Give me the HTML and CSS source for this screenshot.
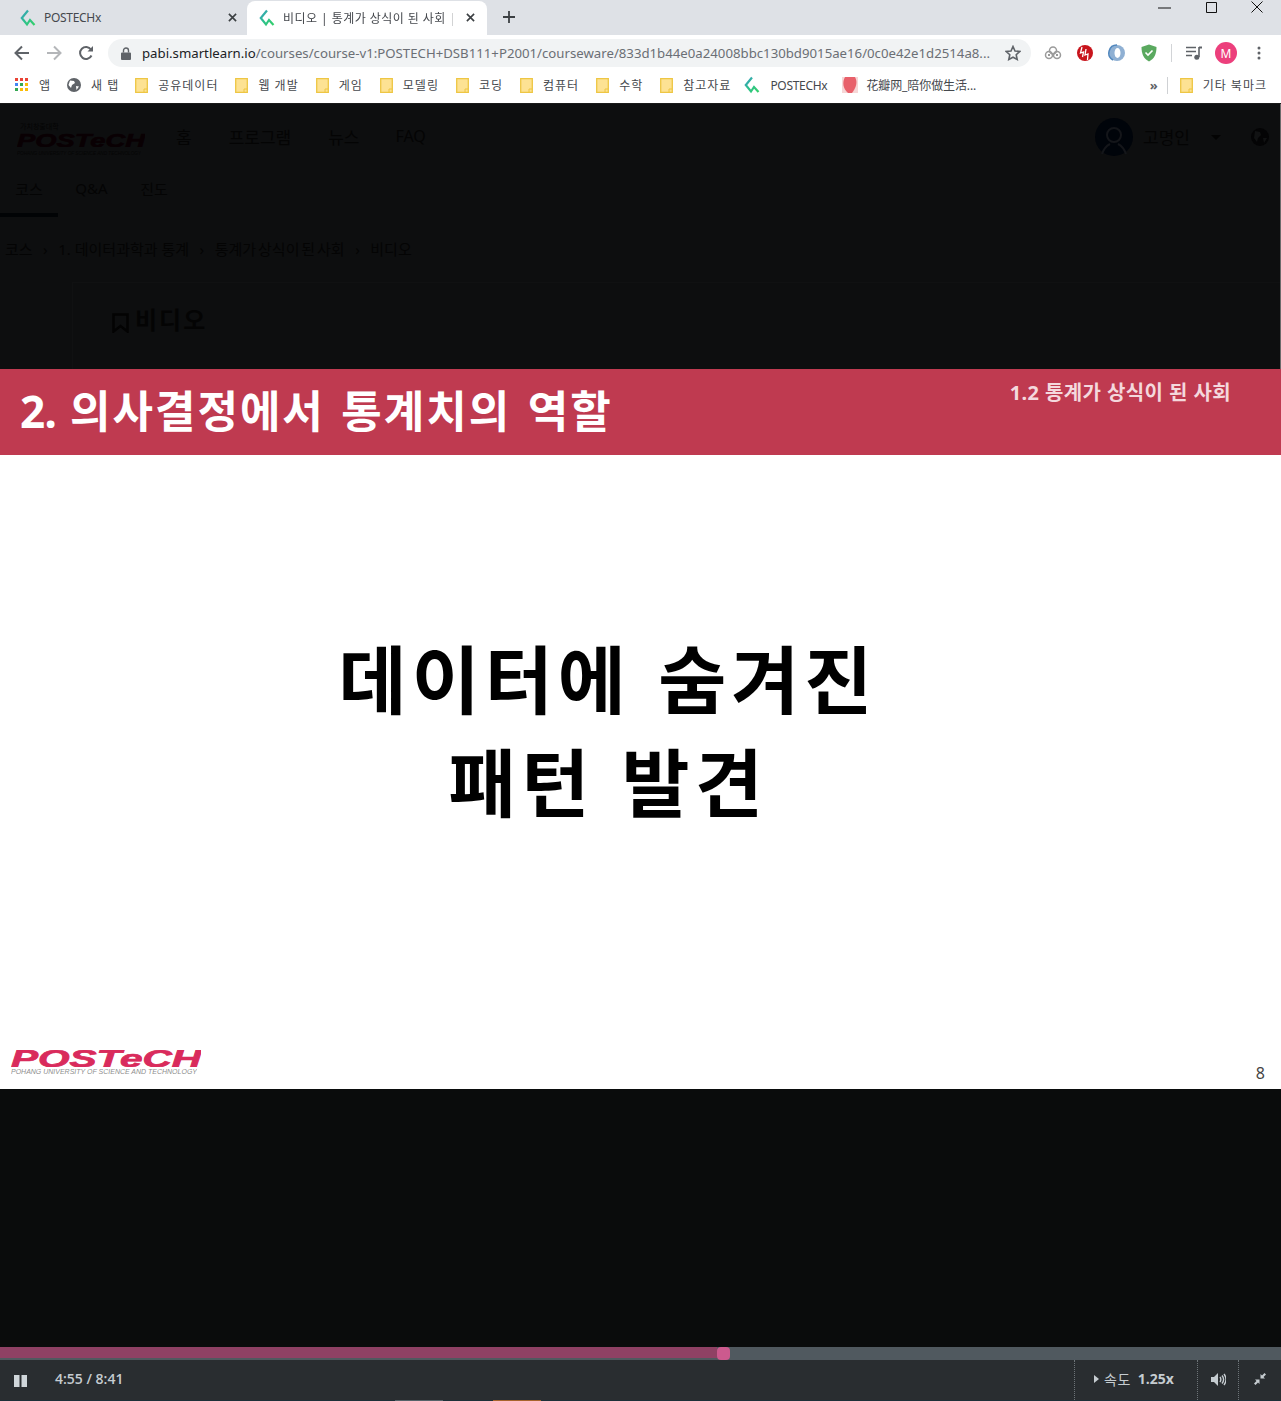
FILE: index.html
```html
<!DOCTYPE html>
<html lang="ko">
<head>
<meta charset="utf-8">
<title>비디오 | 통계가 상식이 된 사회</title>
<link rel="stylesheet" href="styles.css">
</head>
<body>
<svg class="defs" width="0" height="0" aria-hidden="true">
  <defs>
    <linearGradient id="lg" x1="0" y1="0" x2="1" y2="1">
      <stop offset="0" stop-color="#3a9bc4"/><stop offset=".45" stop-color="#2dbf8f"/><stop offset="1" stop-color="#35d06a"/>
    </linearGradient>
    <symbol id="px" viewBox="0 0 18 18">
      <path d="M9 1.5 2.8 9 8 15.500 11 11 15.500 16" fill="none" stroke="url(#lg)" stroke-width="2.200"/>
    </symbol>
    <symbol id="folder" viewBox="0 0 13 15">
      <path d="M.7.700h11.600v13.600H.7z" fill="#fde293" stroke="#eec643" stroke-width="1.300"/>
      <path d="M9 14v-3h3" fill="none" stroke="#eec643"/>
    </symbol>
  </defs>
</svg>

<header class="tabstrip">
  <div class="tab">
    <svg class="tab-ico"><use href="#px"/></svg>
    <span class="tab-title">POSTECHx</span>
    <svg class="tab-x" viewBox="0 0 10 10"><path d="M1 1l8 8M9 1l-8 8"/></svg>
  </div>
  <div class="tab tab-active">
    <svg class="tab-ico"><use href="#px"/></svg>
    <span class="tab-title tab-fade">비디오 | 통계가 상식이 된 사회 | POSTECHx</span>
    <svg class="tab-x" viewBox="0 0 10 10"><path d="M1 1l8 8M9 1l-8 8"/></svg>
  </div>
  <svg class="tab-plus" viewBox="0 0 12 12"><path d="M6 0v12M0 6h12"/></svg>
  <div class="winctl">
    <svg class="win-min" viewBox="0 0 13 3"><path d="M0 1h13"/></svg>
    <svg class="win-max" viewBox="0 0 11 11"><path d="M.5.500h10v10H.5z"/></svg>
    <svg class="win-close" viewBox="0 0 12 12"><path d="M.5.500l11 11M11.500.500l-11 11"/></svg>
  </div>
</header>

<div class="toolbar">
  <svg class="nav nav-back" viewBox="0 0 16 16"><path d="M15 8H2M8 1.500 1.500 8 8 14.500"/></svg>
  <svg class="nav nav-fwd" viewBox="0 0 16 16"><path d="M1 8h13M8 1.500 14.500 8 8 14.500"/></svg>
  <svg class="nav nav-reload" viewBox="0 0 16 16"><path d="M13.500 10.500A6 6 0 1 1 13 4.500"/><path class="fill" d="M15 1v5.500H9.500z"/></svg>
  <div class="omnibox">
    <svg class="lock" viewBox="0 0 10 13"><path d="M1 5.500h8a1 1 0 0 1 1 1V12a1 1 0 0 1-1 1H1a1 1 0 0 1-1-1V6.500a1 1 0 0 1 1-1z"/><path class="lock-arc" d="M2.500 5.500V3.500a2.500 2.500 0 0 1 5 0v2"/></svg>
    <span class="url"><span class="url-host">pabi.smartlearn.io</span>/courses/course-v1:POSTECH+DSB111+P2001/courseware/833d1b44e0a24008bbc130bd9015ae16/0c0e42e1d2514a8...</span>
    <svg class="star" viewBox="0 0 16 16"><path d="M8 1.500l2 4.500 4.800.500-3.600 3.200 1 4.800L8 12.200l-4.200 2.300 1-4.800L1.200 6.500 6 6z"/></svg>
  </div>
  <div class="exts">
    <svg class="ext" viewBox="0 0 18 18"><g fill="none" stroke="#9a9a9a" stroke-width="1.500"><circle cx="9" cy="6.500" r="3.500"/><circle cx="5" cy="11" r="3.500"/><circle cx="13" cy="11" r="3.500"/></g><circle cx="5" cy="11" r="1" fill="#777"/><circle cx="13" cy="11" r="1" fill="#777"/></svg>
    <svg class="ext" viewBox="0 0 18 18"><circle cx="9" cy="9" r="8" fill="#c8141c"/><path d="M6 3 4.500 9l3-1-1 5M10 5l-1 6 3-1-.500 6" fill="none" stroke="#fff" stroke-width="1.300"/></svg>
    <svg class="ext" viewBox="0 0 18 18"><circle cx="9" cy="9" r="8" fill="#8fb0d3"/><ellipse cx="9.500" cy="9" rx="3" ry="5" fill="#fff"/><path d="M9 1a8 8 0 0 0-4 15" fill="none" stroke="#4f86bd" stroke-width="1.500"/></svg>
    <svg class="ext" viewBox="0 0 18 18"><path d="M9 .5 16.500 3c0 7-2 11.500-7.500 14.500C3.500 14.500 1.500 10 1.500 3z" fill="#5aa95f"/><path d="M5.500 8.500 8 11l4.500-4.500" fill="none" stroke="#fff" stroke-width="1.600"/></svg>
    <span class="tool-sep"></span>
    <svg class="ext ext-music" viewBox="0 0 16 14"><path d="M0 1.500h10M0 5.500h10M0 9.500h6" stroke="#5f6368" stroke-width="1.600" fill="none"/><path d="M13 1v10" stroke="#5f6368" stroke-width="1.600"/><path d="M13 .5h3v2h-3z" fill="#5f6368"/><circle cx="10.800" cy="11.200" r="2.500" fill="#5f6368"/></svg>
    <span class="avatar">M</span>
    <svg class="kebab" viewBox="0 0 4 14"><circle cx="2" cy="2" r="1.500"/><circle cx="2" cy="7" r="1.500"/><circle cx="2" cy="12" r="1.500"/></svg>
  </div>
</div>

<nav class="bookmarks">
  <div class="bm bm-apps">
    <svg class="apps" viewBox="0 0 14 14">
      <rect width="3" height="3" fill="#ea4335"/><rect x="5" width="3" height="3" fill="#ea4335"/><rect x="10" width="3" height="3" fill="#ea4335"/>
      <rect y="5" width="3" height="3" fill="#4285f4"/><rect x="5" y="5" width="3" height="3" fill="#34a853"/><rect x="10" y="5" width="3" height="3" fill="#fbbc05"/>
      <rect y="10" width="3" height="3" fill="#34a853"/><rect x="5" y="10" width="3" height="3" fill="#fbbc05"/><rect x="10" y="10" width="3" height="3" fill="#fbbc05"/>
    </svg>앱
  </div>
  <div class="bm bm-newtab">
    <svg class="globe" viewBox="0 0 14 14"><circle cx="7" cy="7" r="7" fill="#5f6368"/><path d="M3 2.500 7 3l1 2-3 2-1 3L1.500 7zM9 8l3 .5-2.500 3.500z" fill="#fff"/></svg>새 탭
  </div>
  <div class="bm"><svg class="fold"><use href="#folder"/></svg>공유데이터</div>
  <div class="bm"><svg class="fold"><use href="#folder"/></svg>웹 개발</div>
  <div class="bm"><svg class="fold"><use href="#folder"/></svg>게임</div>
  <div class="bm"><svg class="fold"><use href="#folder"/></svg>모델링</div>
  <div class="bm"><svg class="fold"><use href="#folder"/></svg>코딩</div>
  <div class="bm"><svg class="fold"><use href="#folder"/></svg>컴퓨터</div>
  <div class="bm"><svg class="fold"><use href="#folder"/></svg>수학</div>
  <div class="bm"><svg class="fold"><use href="#folder"/></svg>참고자료</div>
  <div class="bm bm-px"><svg class="bm-pxico"><use href="#px"/></svg>POSTECHx</div>
  <div class="bm bm-flower">
    <svg class="flower" viewBox="0 0 16 16"><rect width="16" height="16" fill="#f6d6d6"/><path d="M3 0h10c3 5 1 11-3 16H6C1 12 0 5 3 0z" fill="#e8606a"/></svg>花瓣网_陪你做生活...
  </div>
  <div class="bm-right">
    <span class="more">»</span>
    <span class="bm-sep"></span>
    <div class="bm bm-last"><svg class="fold"><use href="#folder"/></svg>기타 북마크</div>
  </div>
</nav>

<main class="page">
  <section class="dim">
    <div class="dim-head">
      <div class="dim-logo">
        <span class="dim-logo-top">가치창출대학</span>
        <svg class="dim-logo-word" viewBox="0 0 128 15"><text x="0" y="14.500" textLength="128" lengthAdjust="spacingAndGlyphs">POSTeCH</text></svg>
        <svg class="dim-logo-sub" viewBox="0 0 124 8"><text x="0" y="6" textLength="124" lengthAdjust="spacingAndGlyphs">POHANG UNIVERSITY OF SCIENCE AND TECHNOLOGY</text></svg>
      </div>
      <span class="dim-nav dim-n1">홈</span>
      <span class="dim-nav dim-n2">프로그램</span>
      <span class="dim-nav dim-n3">뉴스</span>
      <span class="dim-nav dim-n4">FAQ</span>
      <div class="dim-user">
        <svg class="dim-avatar" viewBox="0 0 38 38"><circle cx="19" cy="19" r="19" fill="#00040a"/><circle cx="19" cy="17" r="7" fill="none" stroke="#14161a" stroke-width="2"/><path d="M7 36c2-6 6-9 8-10M31 36c-2-6-6-9-8-10" fill="none" stroke="#14161a" stroke-width="2"/></svg>
        <span class="dim-nav dim-name">고명인</span>
        <span class="dim-caret"></span>
        <svg class="dim-globe" viewBox="0 0 18 18"><circle cx="9" cy="9" r="9" fill="#040405"/><path d="M4 3l5 1 1 3-3 3-1 4-3-4zM12 10l4 0-3 5z" fill="#111213"/></svg>
      </div>
    </div>
    <div class="dim-tabs">
      <span class="dim-tab dim-tab-on">코스</span>
      <span class="dim-tab">Q&amp;A</span>
      <span class="dim-tab">진도</span>
    </div>
    <div class="crumbs">
      <span>코스</span><i>›</i><span>1. 데이터과학과 통계</span><i>›</i><span class="crumb-tight">통계가 상식이 된 사회</span><i>›</i><span>비디오</span>
    </div>
    <div class="dim-panel">
      <svg class="dim-mark" viewBox="0 0 17 20"><path d="M1.500 1.500h14v17L8.500 13l-7 5.500z" fill="none" stroke="#030303" stroke-width="2.500"/></svg>
      <h1 class="dim-title">비디오</h1>
    </div>
  </section>

  <section class="slide">
    <div class="slide-banner">
      <h2 class="slide-title"><span class="slide-no">2. </span>의사결정에서 통계치의 역할</h2>
      <span class="slide-sub">1.2 통계가 상식이 된 사회</span>
    </div>
    <div class="slide-body">
      <p class="slide-big">데이터에 숨겨진<br>패턴 발견</p>
    </div>
    <div class="slide-foot">
      <div class="slide-logo">
        <svg class="slide-word" viewBox="0 0 190 17"><text x="0" y="16.500" textLength="190" lengthAdjust="spacingAndGlyphs">POSTeCH</text></svg>
        <svg class="slide-logo-sub" viewBox="0 0 186 8"><text x="0" y="6.500" textLength="186" lengthAdjust="spacingAndGlyphs">POHANG UNIVERSITY OF SCIENCE AND TECHNOLOGY</text></svg>
      </div>
      <span class="slide-num">8</span>
    </div>
  </section>

  <div class="letterbox"></div>

  <div class="progress">
    <div class="progress-done"></div>
    <span class="progress-knob"></span>
  </div>

  <div class="controls">
    <svg class="pause" viewBox="0 0 13 12"><path d="M0 0h5.500v12H0zM7.500 0H13v12H7.500z"/></svg>
    <span class="time">4:55 / 8:41</span>
    <div class="ctl-right">
      <div class="ctl-speed">
        <span class="ctl-tri"></span>
        <span class="ctl-label">속도</span>
        <span class="ctl-value">1.25x</span>
      </div>
      <div class="ctl-vol">
        <svg viewBox="0 0 15 13"><path class="solid" d="M0 4h3l4-4v13L3 9H0z"/><path d="M9 4c1 1.500 1 3.500 0 5M11 2.500c2 2.500 2 5.500 0 8M13 1c2.600 3.500 2.600 7.500 0 11"/></svg>
      </div>
      <div class="ctl-full">
        <svg viewBox="0 0 12 12"><path d="M12 1.500 10.500 0 8 2.500 6.500 1v4.500H11L9.500 4zM0 10.500 1.500 12 4 9.500 5.500 11V6.500H1L2.500 8z"/></svg>
      </div>
    </div>
  </div>
  <div class="underbar"><span class="ub ub-grey"></span><span class="ub ub-orange"></span></div>
</main>
</body>
</html>
```
FILE: styles.css
```css
* { box-sizing: border-box; }
html, body { margin: 0; padding: 0; }
body {
  width: 1281px;
  height: 1401px;
  overflow: hidden;
  background: #0c0d0e;
  font-family: "Noto Sans", "Noto Sans CJK KR", sans-serif;
  color: #3c4043;
}
.defs { position: absolute; }

/* tab strip */
.tabstrip {
  height: 35px;
  background: #dee1e6;
  display: flex;
  align-items: flex-end;
  padding-left: 8px;
}
.tab {
  width: 239px;
  height: 34px;
  display: flex;
  align-items: center;
  padding: 0 10px 1px 11px;
  font-size: 12px;
  color: #45484d;
}
.tab-active {
  width: 240px;
  padding-right: 12px;
  background: #fff;
  border-radius: 8px 8px 0 0;
}
.tab-ico { width: 18px; height: 18px; flex: none; }
.tab-title {
  flex: 1;
  margin-left: 7px;
  white-space: nowrap;
  overflow: hidden;
  font-family: "Noto Sans", "Noto Sans CJK KR", sans-serif;
  letter-spacing: -.3px;
}
.tab-active .tab-title { letter-spacing: .45px; }
.tab-fade { -webkit-mask-image: linear-gradient(90deg, #000 90%, transparent 98%); mask-image: linear-gradient(90deg, #000 90%, transparent 98%); }
.tab-x { width: 9px; height: 9px; flex: none; margin-left: 6px; stroke: #3c4043; stroke-width: 1.800; fill: none; }
.tab-plus { width: 12px; height: 12px; margin: 0 0 12px 16px; stroke: #3c4043; stroke-width: 1.800; fill: none; }
.winctl {
  margin-left: auto;
  align-self: flex-start;
  display: flex;
  align-items: flex-start;
  padding: 1px 18px 0 0;
  stroke: #111;
  fill: none;
}
.win-min { width: 13px; height: 3px; margin-top: 6px; }
.win-max { width: 11px; height: 11px; margin: 1px 0 0 35px; }
.win-close { width: 12px; height: 12px; margin-left: 34px; }

/* toolbar */
.toolbar {
  height: 35px;
  background: #fff;
  display: flex;
  align-items: center;
  padding: 3px 0 2px 14px;
}
.nav { width: 16px; height: 16px; fill: none; stroke: #5f6368; stroke-width: 2; flex: none; }
.nav-fwd { margin-left: 16px; stroke: #b4b6b9; }
.nav-reload { margin-left: 16px; }
.nav .fill { fill: #5f6368; stroke: none; }
.omnibox {
  width: 923px;
  height: 28px;
  margin-left: 14px;
  border-radius: 14px;
  background: #f1f3f4;
  display: flex;
  align-items: center;
  padding: 0 10px 0 13px;
}
.lock { width: 10px; height: 13px; fill: #5f6368; flex: none; }
.lock .lock-arc { fill: none; stroke: #5f6368; stroke-width: 1.400; }
.url {
  flex: 1;
  margin-left: 11px;
  font-size: 13.210px;
  color: #6b6f75;
  white-space: nowrap;
  overflow: hidden;
}
.url-host { color: #202124; }
.star { width: 16px; height: 16px; fill: none; stroke: #5f6368; stroke-width: 1.600; flex: none; }
.exts { display: flex; align-items: center; padding-left: 13px; }
.ext { width: 18px; height: 18px; flex: none; margin-right: 14px; }
.tool-sep { width: 1px; height: 18px; background: #d2d4d7; margin: 0 14px 0 -1px; }
.ext-music { width: 16px; height: 14px; margin-right: 14px; }
.avatar {
  width: 22px;
  height: 22px;
  border-radius: 50%;
  background: #ec3f7c;
  color: #fff;
  font-size: 12px;
  display: flex;
  align-items: center;
  justify-content: center;
  margin-left: -1px;
}
.kebab { width: 4px; height: 14px; fill: #5f6368; margin-left: 20px; }

/* bookmarks */
.bookmarks {
  height: 34px;
  background: #fff;
  border-bottom: 1px solid #1a1a1a;
  display: flex;
  align-items: center;
  padding: 0 14px 3px 15px;
  font-size: 12px;
  color: #45484d;
  letter-spacing: 1px;
  white-space: nowrap;
}
.bm { display: flex; align-items: center; margin-right: 17px; }
.apps { width: 14px; height: 14px; margin-right: 10px; }
.bm-apps { margin-right: 16px; }
.globe { width: 14px; height: 14px; margin-right: 10px; }
.bm-newtab { margin-right: 16px; }
.fold { width: 13px; height: 15px; margin-right: 10px; }
.bm-px { letter-spacing: -.3px; margin-left: -5px; margin-right: 15px; }
.bm-pxico { width: 18px; height: 18px; margin-right: 9px; }
.bm-flower { font-family: "Noto Sans", "Noto Sans CJK SC", sans-serif; letter-spacing: -.1px; margin-right: 0; }
.flower { width: 16px; height: 16px; margin-right: 8px; }
.bm-right { margin-left: auto; display: flex; align-items: center; }
.more { font-size: 13px; font-weight: 700; color: #5f6368; letter-spacing: 0; margin-right: 9px; }
.bm-sep { width: 1px; height: 17px; background: #cfd1d4; margin-right: 12px; }
.bm-last { margin-right: 0; }

/* dimmed page behind the video */
.page { height: 1297px; display: flex; flex-direction: column; }
.dim {
  height: 265px;
  flex: none;
  background: #0d0e0f;
  color: #040404;
  border-right: 1px solid #6c6c6c;
  overflow: hidden;
}
.dim-head { height: 66px; display: flex; align-items: center; padding-left: 17px; }
.dim-logo { width: 128px; display: flex; flex-direction: column; margin-top: 4px; }
.dim-logo-top { font-size: 7px; line-height: 9px; margin-bottom: 1px; padding-left: 3px; white-space: nowrap; }
.dim-logo-word { width: 128px; height: 15px; display: block; }
.dim-logo-word text { font: italic 700 18.500px "Liberation Sans", sans-serif; fill: #090003; stroke: #090003; stroke-width: .6px; }
.dim-logo-sub { width: 124px; height: 8px; margin-top: 2px; display: block; }
.dim-logo-sub text { font: italic 400 6px "Liberation Sans", sans-serif; fill: #050505; }
.dim-nav { font-size: 17px; margin-bottom: 2px; }
.dim-n1 { margin-left: 31px; }
.dim-n2 { margin-left: 37px; }
.dim-n3 { margin-left: 37px; }
.dim-n4 { margin-left: 36px; font-size: 16px; }
.dim-user { margin-left: auto; display: flex; align-items: center; padding-right: 11px; }
.dim-avatar { width: 38px; height: 38px; }
.dim-name { margin-left: 10px; }
.dim-caret { width: 0; height: 0; border: 5px solid transparent; border-top: 5px solid #030303; border-bottom: 0; margin-left: 21px; }
.dim-globe { width: 18px; height: 18px; margin-left: 30px; }
.dim-tabs { height: 47px; display: flex; }
.dim-tab { width: 58px; padding: 8px 0 0; text-align: center; font-size: 15px; }
.dim-tab + .dim-tab { margin-left: 4.500px; }
.dim-tab-on { border-bottom: 4px solid #010305; }
.crumbs { height: 65px; display: flex; align-items: flex-start; padding: 22px 0 0 5px; font-size: 15px; line-height: 20px; }
.crumbs i { font-style: normal; margin: 0 10.500px; }
.crumb-tight { word-spacing: -2px; }
.dim-panel {
  height: 87px;
  margin-left: 72px;
  border-top: 1px solid #101112;
  border-left: 1px solid #101112;
  display: flex;
  align-items: flex-start;
  padding: 22px 0 0 39px;
}
.dim-mark { width: 17px; height: 20px; margin-top: 8px; }
.dim-title { margin: 0 0 0 6px; font-size: 24px; font-weight: 700; line-height: 30px; letter-spacing: 2px; }

/* slide */
.slide { height: 720px; flex: none; background: #fff; display: flex; flex-direction: column; }
.slide-banner {
  height: 86px;
  flex: none;
  background: #bf3a50;
  color: #fff;
  display: flex;
  justify-content: space-between;
  align-items: flex-start;
  padding: 0 50px 0 20px;
}
.slide-title { margin: 12px 0 0; font-size: 44px; line-height: 60px; font-weight: 700; letter-spacing: 2px; word-spacing: 3px; white-space: nowrap; }
.slide-no { letter-spacing: -.67px; }
.slide-sub { margin-top: 10px; font-size: 20px; line-height: 28px; font-weight: 700; color: #f4d8dd; letter-spacing: .4px; }
.slide-body { flex: 1; display: flex; align-items: center; justify-content: center; padding: 0 65px 34px 0; }
.slide-big { margin: 0; text-align: center; color: #000; font-size: 74px; line-height: 103px; font-weight: 700; letter-spacing: 5px; word-spacing: 3px; }
.slide-foot { height: 49px; flex: none; display: flex; justify-content: space-between; align-items: flex-end; padding: 0 16px 5px 11px; }
.slide-logo { width: 190px; display: flex; flex-direction: column; align-self: flex-start; padding-top: 10px; }
.slide-word { width: 190px; height: 17px; display: block; }
.slide-word text { font: italic 700 23px "Liberation Sans", sans-serif; fill: #d92b5c; stroke: #d92b5c; stroke-width: .7px; }
.slide-logo-sub { width: 186px; height: 8px; display: block; }
.slide-logo-sub text { font: italic 400 6.500px "Liberation Sans", sans-serif; fill: #8e8e8e; }
.slide-num { font-size: 16px; line-height: 22px; color: #444; }

/* player */
.letterbox { height: 258px; flex: none; background: #0a0c0c; }
.progress { height: 13px; flex: none; background: #50595f; display: flex; }
.progress-done { width: 717px; height: 11px; background: #8f4164; }
.progress-knob { width: 13px; height: 13px; border-radius: 4px; background: #cc5a8e; }
.controls {
  height: 40px;
  flex: none;
  background: #292d30;
  display: flex;
  align-items: center;
  padding-left: 14px;
  color: #c5ccd0;
}
.pause { width: 13px; height: 12px; fill: #cfd6da; margin-top: 1px; }
.time { margin-left: 28px; font: 600 14px/20px "Open Sans", sans-serif; margin-bottom: 2px; }
.ctl-right { margin-left: auto; height: 100%; display: flex; align-items: stretch; }
.ctl-speed, .ctl-vol, .ctl-full { display: flex; align-items: center; border-left: 1px dotted #6d7478; padding-bottom: 2px; }
.ctl-speed { width: 123px; padding-left: 19px; }
.ctl-tri { width: 0; height: 0; border: 4px solid transparent; border-left: 5px solid #c5ccd0; border-right: 0; }
.ctl-label { margin-left: 5px; font-size: 14px; letter-spacing: .5px; }
.ctl-value { margin-left: 7px; font: 700 14px/20px "Open Sans", sans-serif; }
.ctl-vol { width: 41px; justify-content: center; }
.ctl-vol svg { width: 15px; height: 13px; fill: none; stroke: #c5ccd0; stroke-width: 1.400; }
.ctl-vol .solid { fill: #c5ccd0; stroke: none; }
.ctl-full { width: 43px; padding-left: 15px; }
.ctl-full svg { width: 12px; height: 12px; fill: #c5ccd0; }
.underbar { height: 1px; flex: none; background: #1d3038; display: flex; padding-left: 395px; }
.ub { width: 48px; height: 1px; }
.ub-grey { background: #56636a; }
.ub-orange { background: #a8642e; margin-left: 50px; }
```
